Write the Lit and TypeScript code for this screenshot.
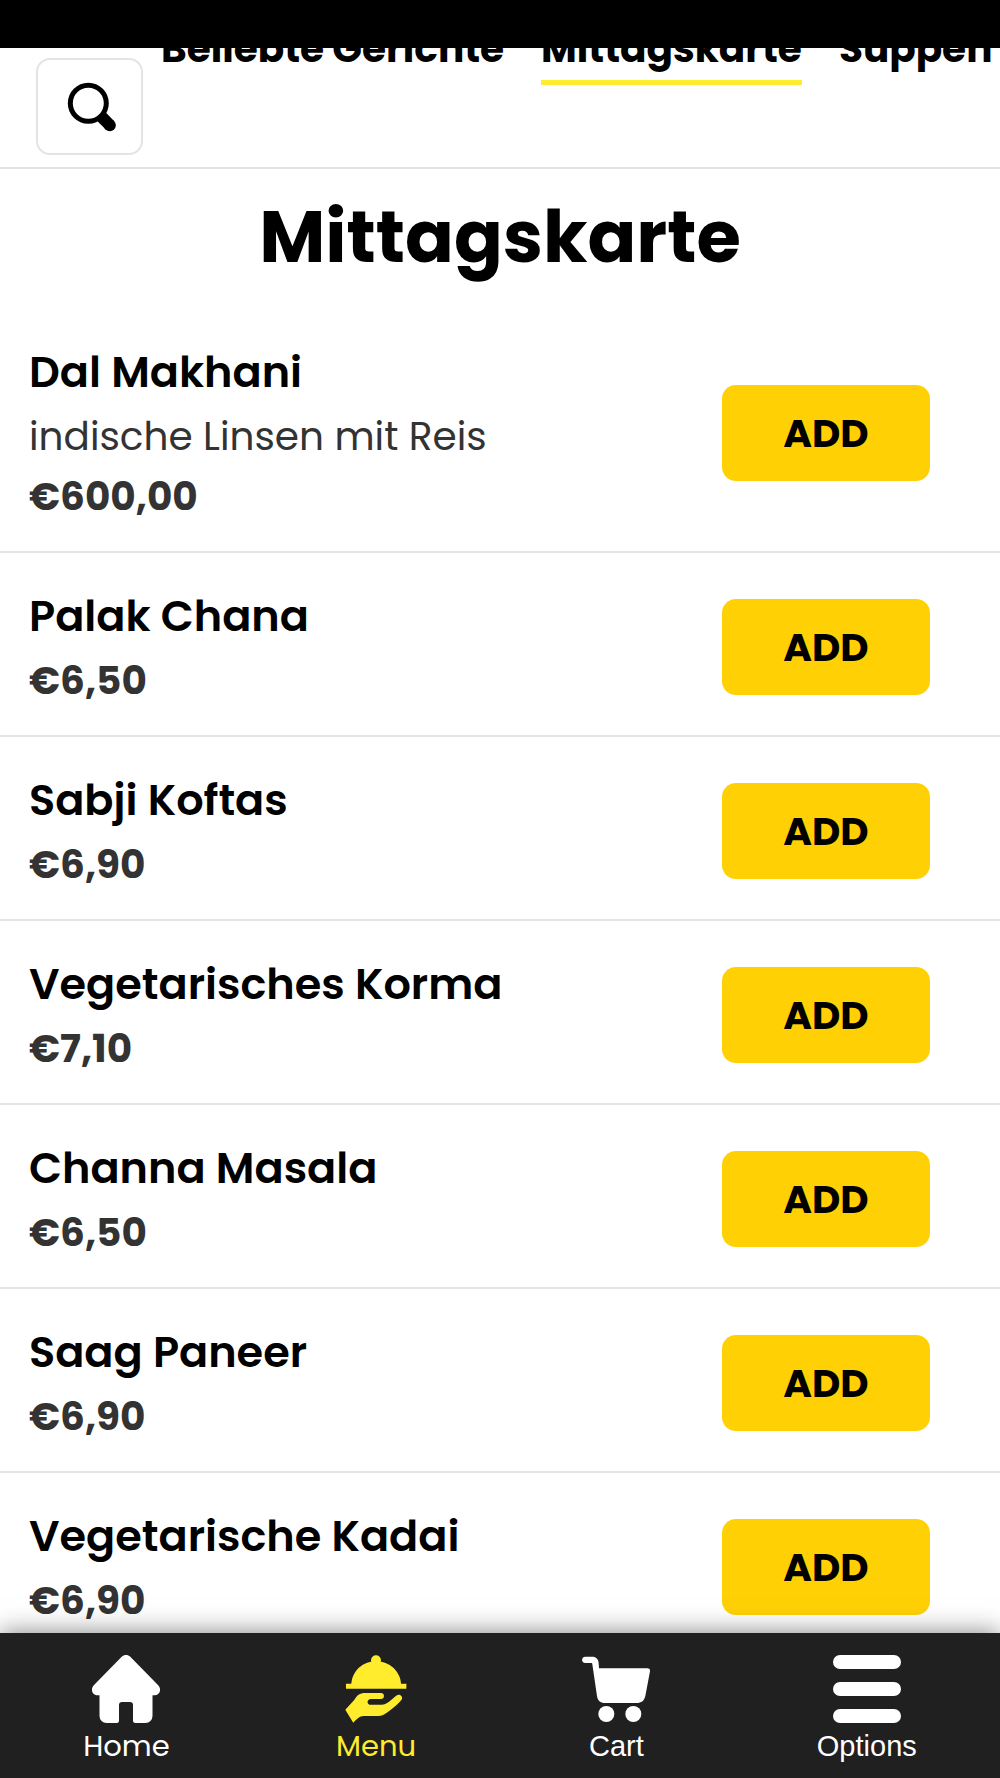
import { LitElement, html, css, svg, nothing, type TemplateResult } from "lit";
import { customElement, property, state } from "lit/decorators.js";
import { classMap } from "lit/directives/class-map.js";

interface Dish {
  name: string;
  description?: string;
  price: string;
}

const DISHES: Dish[] = [
  { name: "Dal Makhani", description: "indische Linsen mit Reis", price: "€600,00" },
  { name: "Palak Chana", price: "€6,50" },
  { name: "Sabji Koftas", price: "€6,90" },
  { name: "Vegetarisches Korma", price: "€7,10" },
  { name: "Channa Masala", price: "€6,50" },
  { name: "Saag Paneer", price: "€6,90" },
  { name: "Vegetarische Kadai", price: "€6,90" },
];

const CATEGORIES = ["Beliebte Gerichte", "Mittagskarte", "Suppen"];

const searchIcon = svg`
  <svg width="49" height="50" viewBox="0 0 49 50" aria-hidden="true" fill="none" stroke="#000">
    <circle cx="21.3" cy="21.3" r="18" stroke-width="5" />
    <path d="M34.5 34.8L43 43.4" stroke-width="12" />
    <circle cx="42.8" cy="43.2" r="6" fill="#000" stroke="none" />
  </svg>`;

const homeIcon = svg`
  <svg width="68" height="68" viewBox="0 0 68 68" aria-hidden="true" fill="currentColor">
    <path d="M34 0c1.6 0 3.1.6 4.3 1.8L66.2 30.2c3.8 4 1.4 10.1-4 10.1h-1.7V61a7 7 0 0 1-7 7H43.500a2.500 2.500 0 0 1-2.500-2.500V50a3 3 0 0 0-3-3H30a3 3 0 0 0-3 3v15.500a2.500 2.500 0 0 1-2.500 2.500H14.500a7 7 0 0 1-7-7V40.300H5.800c-5.400 0-7.800-6.100-4-10.100L29.700 1.800C30.900.6 32.400 0 34 0z" />
  </svg>`;

const menuIcon = svg`
  <svg width="62" height="68" viewBox="79 102 186 206" aria-hidden="true" fill="currentColor">
    <circle cx="172" cy="118" r="15" />
    <path d="M97 191C99 151 131 121 172 121s74 30 76 70z" />
    <path d="M81 189h183v15H81z" />
    <path d="M79 268L106 238C114 225 122 217 140 217H187a9 9 0 0 1 0 18H157c-14 0-14 18 0 18H189C205 253 216 240 234 225C243 217 255 227 250 237C244 246 231 257 213 271C199 282 191 287 178 287H135C121 287 113 298 103 307z" />
  </svg>`;

const cartIcon = svg`
  <svg width="68" height="68" viewBox="66 102 204 204" aria-hidden="true" fill="currentColor">
    <path d="M76 107H96c13 0 19 8 20 19l1 16H262c6 0 9 4 8 9L256 225c-4 15-12 21-26 21H135c-14 0-22-7-24-21L97 130c0-3-1-4-4-4H76c-13 0-13-19 0-19z" />
    <circle cx="139" cy="279" r="24" />
    <circle cx="220" cy="279" r="24" />
  </svg>`;

const optionsIcon = svg`
  <svg width="68" height="68" viewBox="0 0 68 68" aria-hidden="true" fill="currentColor">
    <rect width="68" height="14" rx="7" />
    <rect y="27" width="68" height="14" rx="7" />
    <rect y="54" width="68" height="14" rx="7" />
  </svg>`;

@customElement("dish-row")
class DishRow extends LitElement {
  @property({ attribute: false }) dish!: Dish;

  static styles = css`
    :host {
      display: flex;
      align-items: center;
      justify-content: space-between;
      padding: 30px 70px 24px 29px;
      border-bottom: 2px solid #e4e4e4;
      font-family: Poppins, Inter, "Liberation Sans", sans-serif;
    }
    .name,
    .description,
    .price {
      margin: 0;
      line-height: 60px;
      font-size: 39px;
      color: #333;
    }
    .name {
      margin-bottom: 2px;
      line-height: 66px;
      font-size: 43px;
      font-weight: 600;
      color: #000;
    }
    .description {
      font-weight: 400;
    }
    .price {
      font-weight: 700;
    }
    .add {
      flex: none;
      width: 208px;
      height: 96px;
      padding: 0;
      border: 0;
      border-radius: 14px;
      background: #ffd105;
      color: #000;
      font: inherit;
      font-size: 39px;
      font-weight: 700;
      cursor: pointer;
    }
  `;

  render() {
    const { name, description, price } = this.dish;
    return html`
      <div>
        <h2 class="name">${name}</h2>
        ${description ? html`<p class="description">${description}</p>` : nothing}
        <p class="price">${price}</p>
      </div>
      <button class="add" type="button" aria-label="ADD ${name}">ADD</button>
    `;
  }
}

@customElement("app-root")
class AppRoot extends LitElement {
  @state() private category = "Mittagskarte";

  static styles = css`
    :host {
      display: flex;
      flex-direction: column;
      height: 100vh;
      background: #fff;
      color: #000;
      font-family: Poppins, Inter, "Liberation Sans", sans-serif;
    }
    .status {
      flex: none;
      height: 48px;
      background: #000;
    }
    .header {
      flex: none;
      display: flex;
      align-items: flex-start;
      gap: 18px;
      padding-left: 36px;
      border-bottom: 2px solid #e2e2e2;
      overflow: hidden;
    }
    .search {
      flex: none;
      display: grid;
      place-items: center;
      box-sizing: border-box;
      width: 107px;
      height: 97px;
      margin: 10px 0 12px;
      padding: 0 0 0 4px;
      border: 2px solid #e4e4e4;
      border-radius: 14px;
      background: #fff;
      cursor: pointer;
    }
    .tabs {
      display: flex;
      gap: 37px;
      margin-top: -26px;
    }
    .tab {
      padding-bottom: 4px;
      border-bottom: 5px solid transparent;
      color: #000;
      font-size: 39px;
      font-weight: 700;
      line-height: 54px;
      text-decoration: none;
      white-space: nowrap;
    }
    .tab.active {
      border-color: #ffec2d;
    }
    .content {
      flex: 1;
      min-height: 0;
      overflow-y: auto;
      scrollbar-width: none;
    }
    .title {
      margin: 0 0 4px;
      text-align: center;
      font-size: 72px;
      font-weight: 700;
      line-height: 136px;
    }
    .nav {
      flex: none;
      display: flex;
      justify-content: space-around;
      box-sizing: border-box;
      min-height: 145px;
      padding-top: 22px;
      background: #202020;
      box-shadow: 0 0 24px rgba(0, 0, 0, 0.5);
      z-index: 1;
    }
    .link {
      display: flex;
      flex-direction: column;
      align-items: center;
      gap: 5px;
      color: #fff;
      font-size: 29px;
      font-weight: 400;
      line-height: 36px;
      text-decoration: none;
    }
    .link.plain {
      font-family: "Liberation Sans", sans-serif;
    }
    .link.active {
      color: #ffec2d;
    }
  `;

  private tab(name: string) {
    return html`<a
      class=${classMap({ tab: true, active: name === this.category })}
      href="#"
      @click=${(e: Event) => {
        e.preventDefault();
        this.category = name;
      }}
      >${name}</a
    >`;
  }

  private link(label: string, icon: TemplateResult<2>, kind = "") {
    return html`<a class="link ${kind}" href="#">${icon}<span>${label}</span></a>`;
  }

  render() {
    return html`
      <div class="status"></div>
      <header class="header">
        <button class="search" type="button" aria-label="Suche">${searchIcon}</button>
        <nav class="tabs">${CATEGORIES.map((c) => this.tab(c))}</nav>
      </header>
      <main class="content">
        <h1 class="title">${this.category}</h1>
        ${DISHES.map((d) => html`<dish-row .dish=${d}></dish-row>`)}
      </main>
      <nav class="nav">
        ${this.link("Home", homeIcon)} ${this.link("Menu", menuIcon, "active")}
        ${this.link("Cart", cartIcon, "plain")} ${this.link("Options", optionsIcon, "plain")}
      </nav>
    `;
  }
}
